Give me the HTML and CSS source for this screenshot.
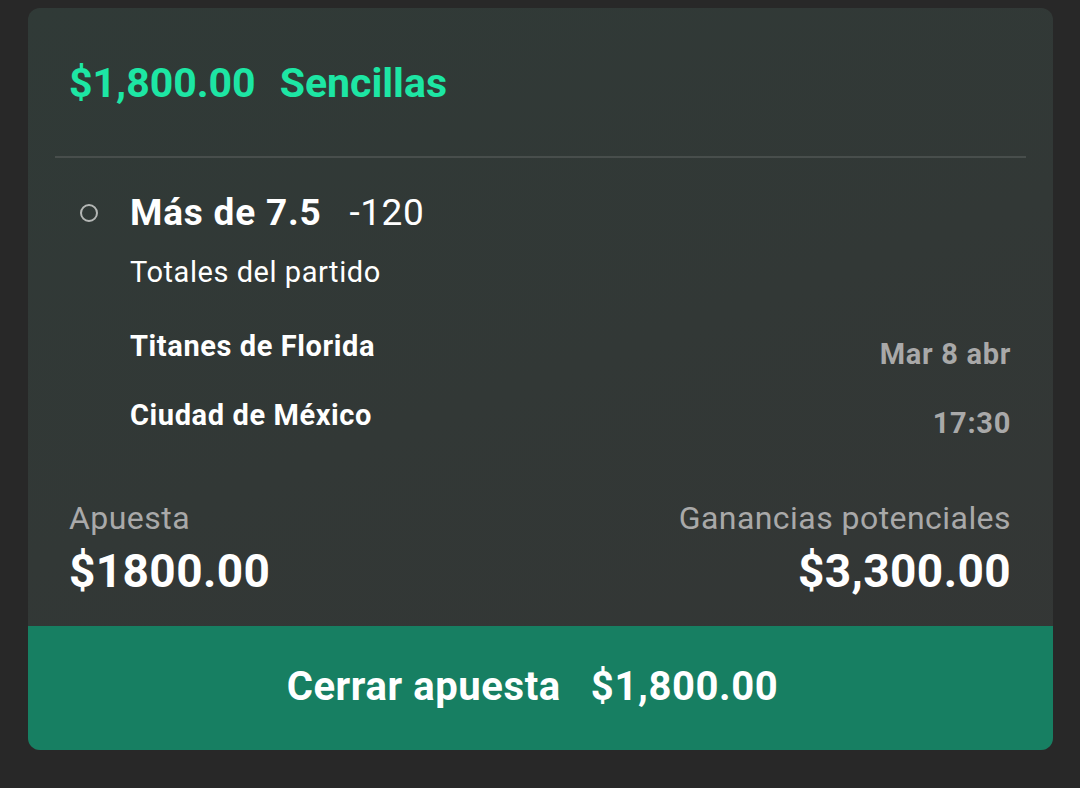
FILE: index.html
```html
<!DOCTYPE html>
<html lang="es">
<head>
  <meta charset="UTF-8">
  <title>Apuesta</title>
  <link rel="stylesheet" href="styles.css">
</head>
<body>
<div class="card">
  <div class="head">
    <span class="head-amount">$1,800.00</span>
    <span class="head-type">Sencillas</span>
  </div>
  <div class="divider"></div>

  <div class="pick">
    <div class="pick-row">
      <span class="dot"></span>
      <span class="pick-name">Más de 7.5</span>
      <span class="pick-odds">-120</span>
    </div>
    <div class="pick-market">Totales del partido</div>

    <div class="match">
      <div class="match-row">
        <span class="team">Titanes de Florida</span>
        <span class="when">Mar 8 abr</span>
      </div>
      <div class="match-row">
        <span class="team">Ciudad de México</span>
        <span class="when">17:30</span>
      </div>
    </div>
  </div>

  <div class="totals">
    <div class="total">
      <div class="total-label">Apuesta</div>
      <div class="total-value">$1800.00</div>
    </div>
    <div class="total total-right">
      <div class="total-label">Ganancias potenciales</div>
      <div class="total-value">$3,300.00</div>
    </div>
  </div>

  <div class="cashout">
    <span>Cerrar apuesta</span>
    <span>$1,800.00</span>
  </div>
</div>
</body>
</html>
```

FILE: styles.css
```css
* {
  margin: 0;
  padding: 0;
  box-sizing: border-box;
}

body {
  background-color: #282828;
  font-family: Roboto, "Noto Sans", sans-serif;
  color: #fff;
  padding: 8px 27px 0 28px;
}

.card {
  height: 742px;
  border-radius: 12px;
  overflow: hidden;
  background: linear-gradient(160deg, #303a37 0%, #323836 50%, #343635 100%);
  display: flex;
  flex-direction: column;
}

.head {
  height: 148px;
  padding: 2px 0 0 41px;
  display: flex;
  align-items: center;
  gap: 24px;
  color: #1de6a4;
  font-size: 41px;
  font-weight: 700;
}

.divider {
  height: 2px;
  margin: 0 27px;
  background-color: #484e4c;
}

.pick {
  padding: 33px 42px 0 52px;
}

.pick-row {
  display: flex;
  align-items: center;
}

.dot {
  width: 18px;
  height: 18px;
  border: 2px solid #b4b7b5;
  border-radius: 50%;
  margin-right: 32px;
}

.pick-name {
  font-size: 37px;
  font-weight: 700;
  letter-spacing: 0.8px;
  margin-right: 28px;
}

.pick-odds {
  font-size: 37px;
  letter-spacing: 0.5px;
}

.pick-market {
  margin: 21px 0 0 50px;
  font-size: 29px;
  letter-spacing: 0.55px;
}

.match {
  margin: 40px 0 0 50px;
}

.match-row {
  display: flex;
  justify-content: space-between;
  align-items: flex-start;
  height: 69px;
}

.team {
  font-size: 29px;
  font-weight: 700;
  letter-spacing: 0.6px;
}

.when {
  margin-top: 8px;
  font-size: 29px;
  font-weight: 700;
  letter-spacing: 0.7px;
  color: #a9a9a9;
}

.totals {
  flex: 1;
  display: flex;
  justify-content: space-between;
  padding: 32px 42px 0 41px;
}

.total-right {
  text-align: right;
}

.total-label {
  font-size: 32px;
  letter-spacing: 0.45px;
  color: #a9a9a9;
}

.total-value {
  margin-top: 7px;
  font-size: 46px;
  font-weight: 700;
  letter-spacing: 0.4px;
}

.cashout {
  height: 124px;
  background-color: #177f62;
  display: flex;
  justify-content: center;
  align-items: center;
  gap: 30px;
  font-size: 40px;
  font-weight: 700;
  letter-spacing: 0.6px;
  padding: 0 16px 4px 0;
}
```
